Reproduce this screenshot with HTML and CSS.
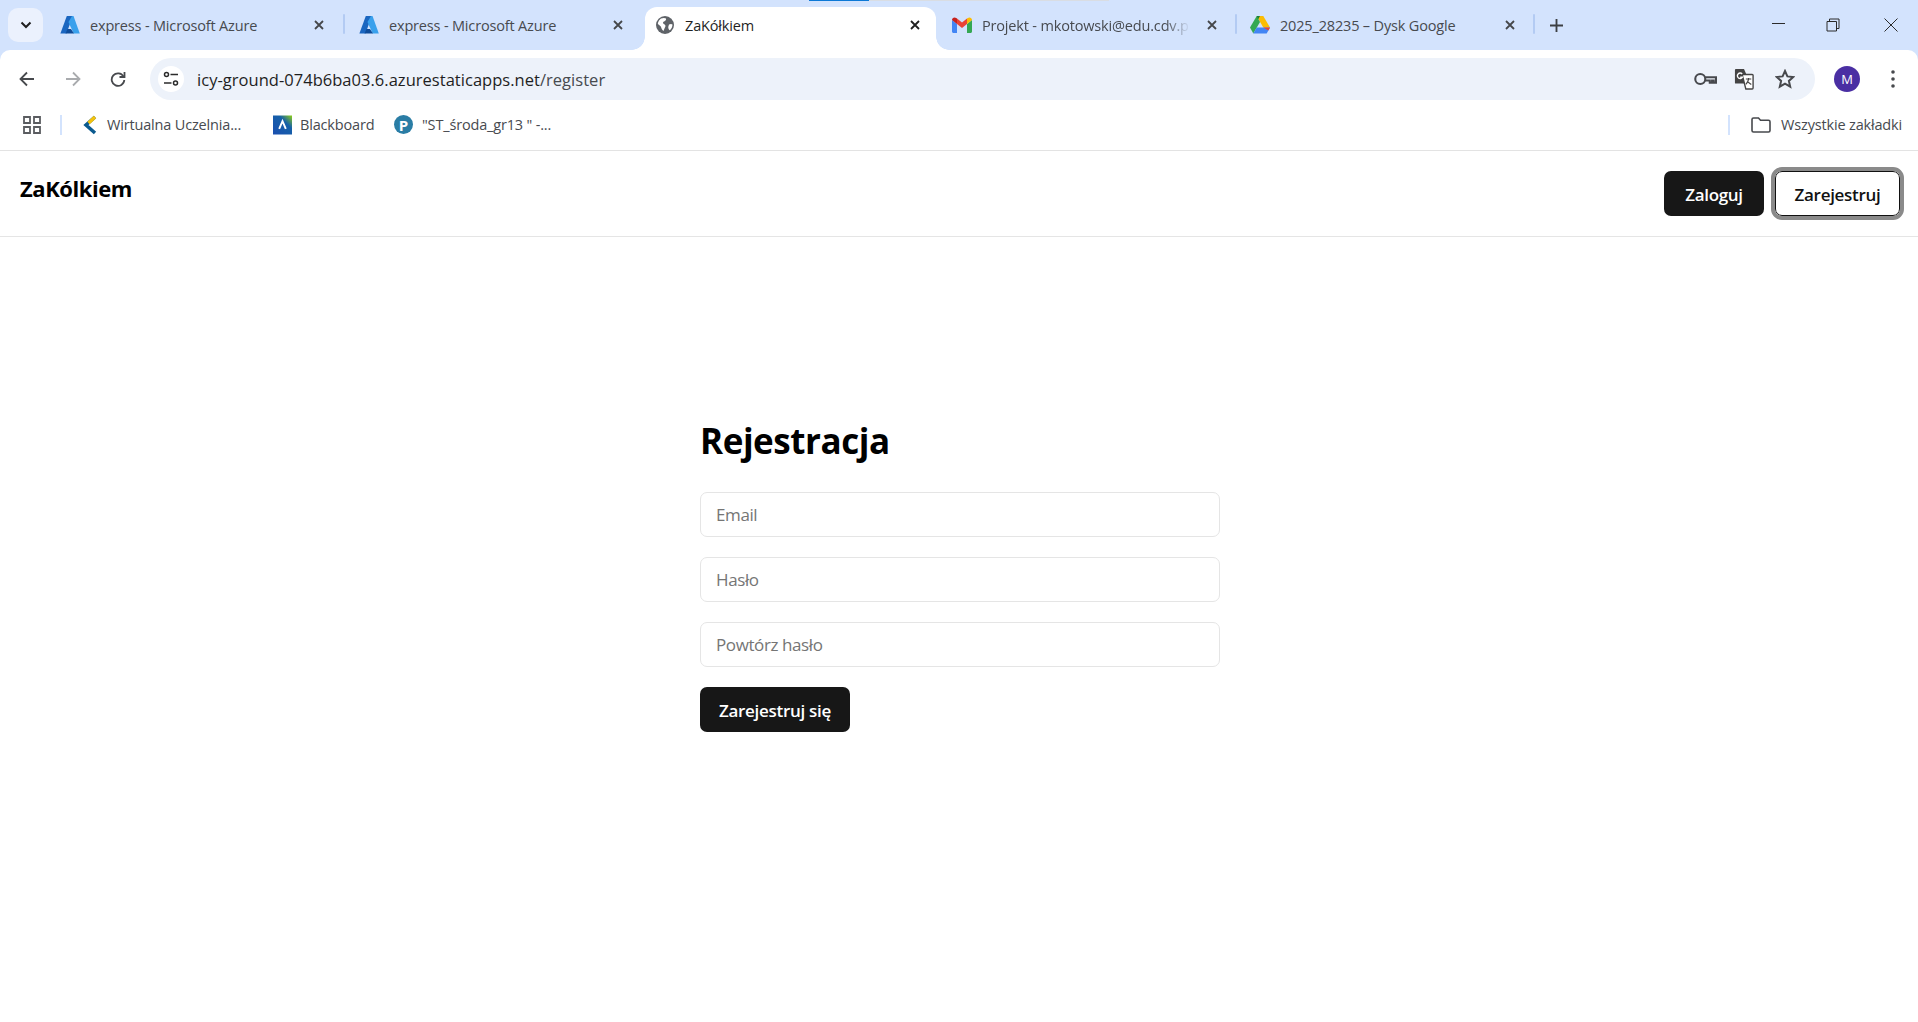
FILE: index.html
```html
<!DOCTYPE html>
<html lang="pl">
<head>
<meta charset="utf-8">
<title>ZaKółkiem</title>
<link rel="stylesheet" href="styles.css">
</head>
<body>
<div class="loadbar"><span class="loadbar-fill"></span></div>
<div class="tabstrip">
  <button class="tabsearch"><svg width="12" height="8" viewBox="0 0 12 8"><path d="M1.500 1.500 6 6l4.500-4.500" fill="none" stroke="#1f1f1f" stroke-width="2"/></svg></button>
  <div class="tab t1">
    <svg class="fav" viewBox="0 0 20 20"><path d="M6.800 1h6L6.500 18.500H.4z" fill="#1a66c0"/><path d="M12 1h1.500l6.300 17.500h-6.200L8.500 7z" fill="#39a0ec"/><path d="M5.500 18.500h8.500l-3-4.500H7.500z" fill="#0e4c9a"/></svg>
    <span class="tabtitle">express - Microsoft Azure</span>
    <svg class="x" viewBox="0 0 10 10"><path d="m1 1 8 8M9 1 1 9"/></svg>
  </div>
  <i class="tsep"></i>
  <div class="tab t2">
    <svg class="fav" viewBox="0 0 20 20"><path d="M6.800 1h6L6.500 18.500H.4z" fill="#1a66c0"/><path d="M12 1h1.500l6.300 17.500h-6.200L8.500 7z" fill="#39a0ec"/><path d="M5.500 18.500h8.500l-3-4.500H7.500z" fill="#0e4c9a"/></svg>
    <span class="tabtitle">express - Microsoft Azure</span>
    <svg class="x" viewBox="0 0 10 10"><path d="m1 1 8 8M9 1 1 9"/></svg>
  </div>
  <div class="tab active">
    <svg class="fav" viewBox="0 0 20 20"><circle cx="10" cy="10" r="9" fill="#5f6368"/><path d="M6 3.500c2-.8 4-.8 5 0 .6 1.500-1 2.800-2.500 3.300-1 .8-.5 2 .8 2.500 1.500.7 1.500 2.300.5 3.500L8.500 16C6.800 15 6.500 13 5.800 11.500 4.800 10.500 3.400 9.800 2.800 8.500 3.300 6.300 4.500 4.500 6 3.500zM14 9.500c1.400-.8 2.700-.8 3.500 0 0 2.200-1 4.300-2.600 5.700-1.200-.6-1.800-2-1.600-3.500z" fill="#fff"/></svg>
    <span class="tabtitle">ZaKółkiem</span>
    <svg class="x" viewBox="0 0 10 10"><path d="m1 1 8 8M9 1 1 9"/></svg>
  </div>
  <div class="tab t4">
    <svg class="fav" viewBox="0 0 20 16"><path d="M0 3v11.500C0 15.300.7 16 1.500 16H5V7z" fill="#4285f4"/><path d="M15 7v9h3.500c.8 0 1.500-.7 1.500-1.500V3z" fill="#34a853"/><path d="M5 7V1.500L10 5.500l5-4V7l-5 4z" fill="#ea4335"/><path d="M0 3c0-2.200 2.500-3.400 4.200-2L5 1.500V7z" fill="#c5221f"/><path d="M15 1.500 15.800 1C17.500-.4 20 .8 20 3l-5 4z" fill="#fbbc04"/></svg>
    <span class="tabtitle fade">Projekt - mkotowski@edu.cdv.pl</span>
    <svg class="x" viewBox="0 0 10 10"><path d="m1 1 8 8M9 1 1 9"/></svg>
  </div>
  <i class="tsep"></i>
  <div class="tab t5">
    <svg class="fav" viewBox="0 0 20 18"><path d="M6.700 0h6.600l6.700 11.500h-6.700z" fill="#fbbc04"/><path d="M6.700 0 0 11.500 3.300 17.500 10 6z" fill="#34a853"/><path d="M3.300 17.500h13.400L20 11.500H6.700z" fill="#4285f4"/><path d="M6.700 0h3.300L8 3.400z" fill="#188038"/><path d="M13.300 11.500H20l-1.500 3z" fill="#ea4335"/></svg>
    <span class="tabtitle">2025_28235 – Dysk Google</span>
    <svg class="x" viewBox="0 0 10 10"><path d="m1 1 8 8M9 1 1 9"/></svg>
  </div>
  <i class="tsep"></i>
  <svg class="plus" viewBox="0 0 14 14"><path d="M7 0v14M0 7h14"/></svg>
  <div class="winctl">
    <svg class="min" viewBox="0 0 14 14"><path d="M0 5.500h13"/></svg>
    <svg viewBox="0 0 14 14"><path d="M1 3.500h9.500V13H1zM3.500 3.500V1H13v9.500h-2.500"/></svg>
    <svg viewBox="0 0 14 14"><path d="m.5.500 13 13M13.500.500l-13 13"/></svg>
  </div>
</div>
<div class="toolbar-bg">
<div class="toolbar">
  <svg class="navic back" viewBox="0 0 16 16"><path d="M15 8H2M8 1.500 1.500 8 8 14.500"/></svg>
  <svg class="navic fwd" viewBox="0 0 16 16"><path d="M1 8h13M8 1.500 14.500 8 8 14.500"/></svg>
  <svg class="navic reload" viewBox="0 0 16 16"><path d="M13.500 5.500A6.300 6.300 0 1 0 14.300 9"/><path d="M14.500 1v5h-5" /></svg>
  <div class="omnibox">
    <span class="tune"><svg viewBox="0 0 16 16" width="16" height="16"><circle cx="3.500" cy="3.500" r="2" /><path d="M7.500 3.500H15M1 12h7.500"/><circle cx="12.500" cy="12" r="2"/></svg></span>
    <span class="url">icy-ground-074b6ba03.6.azurestaticapps.net<span class="urlpath">/register</span></span>
    <svg class="omic key" viewBox="0 0 22 13"><circle cx="6" cy="6.500" r="4.800"/><path d="M10.800 4.800H21v5.200h-2.200V8h-1.500v2h-2.200V8h-4.500"/></svg>
    <svg class="omic tr" viewBox="0 0 22 24"><path d="M1 2c0-.6.400-1 1-1h9l7 16H2c-.6 0-1-.4-1-1z" fill="#444" stroke="none"/><path d="M9 7h11c.6 0 1 .4 1 1v14c0 .6-.4 1-1 1h-7z" fill="#fff" stroke="#444" stroke-width="1.500"/><path d="M9 6.500A3 3 0 1 0 9.300 10H6.800" stroke="#fff" stroke-width="1.500"/><path d="M13 12h6M16 11v1c0 3-2 5-3 6M14.500 14c1 2 3 3 4.500 4" stroke="#444" stroke-width="1.300"/></svg>
    <svg class="omic star" viewBox="0 0 20 20"><path d="m10 2 2.400 5.400 5.900.6-4.400 3.900 1.300 5.800L10 14.700l-5.200 3 1.300-5.800L1.700 8l5.900-.6z"/></svg>
  </div>
  <div class="avatar">M</div>
  <svg class="kebab" viewBox="0 0 4 18"><circle cx="2" cy="2" r="1.800"/><circle cx="2" cy="9" r="1.800"/><circle cx="2" cy="16" r="1.800"/></svg>
</div>
</div>
<div class="bookmarks">
  <svg class="apps" viewBox="0 0 18 18"><path d="M1 1h6v6H1zM11 1h6v6h-6zM1 11h6v6H1zM11 11h6v6h-6z"/></svg>
  <i class="bsep"></i>
  <svg class="bm-ic wu" viewBox="0 0 14 20"><path d="M12 2 3 10l9 8" fill="none" stroke="#0b5a8f" stroke-width="3.500"/><path d="M12 2 5.500 8" fill="none" stroke="#f4c20d" stroke-width="3.500"/></svg>
  <span class="bm wu-t">Wirtualna Uczelnia...</span>
  <span class="bb"><svg viewBox="0 0 20 20" width="19" height="20"><defs><linearGradient id="bbg" x1="0" y1="1" x2="1" y2="0"><stop offset="0" stop-color="#1a4fb0"/><stop offset=".65" stop-color="#1560a8"/><stop offset="1" stop-color="#8fd015"/></linearGradient></defs><rect width="20" height="20" fill="url(#bbg)"/><path d="M6.500 14 10 6l3.500 8" fill="none" stroke="#fff" stroke-width="2"/></svg></span>
  <span class="bm bb-t">Blackboard</span>
  <span class="pp">P</span>
  <span class="bm pp-t">"ST_środa_gr13 " -...</span>
  <i class="bsep right"></i>
  <svg class="folder" viewBox="0 0 20 16"><path d="M1 2.500C1 1.700 1.700 1 2.500 1h5l2 2.200h8c.8 0 1.500.7 1.500 1.500v8.800c0 .8-.7 1.500-1.500 1.500h-15c-.8 0-1.500-.7-1.500-1.500z"/></svg>
  <span class="bm all">Wszystkie zakładki</span>
</div>
<header class="site">
  <div class="brand">ZaKólkiem</div>
  <nav class="actions">
    <button class="btn dark">Zaloguj</button>
    <button class="btn light">Zarejestruj</button>
  </nav>
</header>
<main class="page">
  <h1>Rejestracja</h1>
  <form class="form">
    <input class="field" type="email" placeholder="Email">
    <input class="field" type="password" placeholder="Hasło">
    <input class="field" type="password" placeholder="Powtórz hasło">
    <button class="btn dark submit" type="button">Zarejestruj się</button>
  </form>
</main>
</body>
</html>
```
FILE: styles.css
```css
*{box-sizing:border-box}
html,body{margin:0;padding:0;height:100%;overflow:hidden;background:#fff}
body{font-family:"Open Sans","Noto Sans",sans-serif;color:#000;position:relative}
button,input{font-family:inherit}
.loadbar{position:absolute;left:809px;top:0;width:300px;height:1px;background:#d9dde3}
.loadbar-fill{display:block;width:60px;height:1px;background:#0b78d6}
.tabstrip{height:50px;background:#d3e3fd;display:flex;align-items:flex-start;padding-left:8px}
.tabsearch{width:35px;height:34px;margin-top:8px;border:0;border-radius:10px;background:#ebf1fd;display:flex;align-items:center;justify-content:center;padding:0;flex:none}
.tab{height:43px;margin-top:7px;display:flex;align-items:center;flex:none;padding-bottom:7px;position:relative}
.fav{width:20px;height:20px;flex:none}
.tabtitle{font-size:14.500px;letter-spacing:-.17px;color:#474a4f;white-space:nowrap;overflow:hidden;flex:1;margin-left:10px}
.x{width:10px;height:10px;fill:none;stroke:#45474a;stroke-width:1.800;flex:none}
.t1{margin-left:17px;width:283px}
.t1 .x,.t2 .x{margin-right:19px}
.tsep{width:2px;height:20px;background:#b3cbf3;border-radius:1px;margin-top:14px;flex:none}
.t2{margin-left:14px;width:283px}
.active{margin-left:3px;width:291px;background:#fff;border-radius:12px 12px 0 0;padding-left:10px}
.active::before,.active::after{content:"";position:absolute;bottom:0;width:13px;height:13px}
.active::before{left:-13px;background:radial-gradient(circle at 0 0,transparent 12.500px,#fff 13px)}
.active::after{right:-13px;background:radial-gradient(circle at 100% 0,transparent 12.500px,#fff 13px)}
.active .tabtitle{color:#1f1f1f}
.active .x{stroke:#1f1f1f;margin-right:16px}
.t4{margin-left:16px;width:283px}
.t4 .fav{height:16px}
.t4 .x{margin-right:18px}
.t4 .tabtitle{margin-right:17px}
.fade{-webkit-mask-image:linear-gradient(90deg,#000 88%,transparent);mask-image:linear-gradient(90deg,#000 88%,transparent)}
.t5{margin-left:13px;width:283px}
.t5 .fav{height:18px}
.t5 .x{margin-right:18px}
.plus{width:13px;height:13px;fill:none;stroke:#3c3f43;stroke-width:2;margin:19px 0 0 15px;flex:none}
.winctl{margin-left:auto;display:flex;margin-top:18px;padding-right:20px;gap:44px}
.winctl svg{width:14px;height:14px;fill:none;stroke:#2b2b2b;stroke-width:1}
.winctl .min{margin-right:-4px}
.toolbar-bg{background:#d3e3fd}
.toolbar{height:50px;background:#fff;border-radius:10px 10px 0 0;display:flex;align-items:center;padding-top:8px}
.navic{width:16px;height:16px;fill:none;stroke:#47494d;stroke-width:1.800;flex:none}
.back{margin-left:19px}
.fwd{margin-left:30px;stroke:#a9abae}
.reload{margin-left:29px}
.omnibox{margin-left:24px;width:1665px;height:42px;border-radius:21px;background:#edf2fa;display:flex;align-items:center;flex:none}
.tune{width:26px;height:26px;margin-left:8px;border-radius:50%;background:#fff;display:flex;align-items:center;justify-content:center;flex:none}
.tune svg{fill:none;stroke:#2b2b2b;stroke-width:1.500}
.url{font-size:16.500px;letter-spacing:.03px;color:#1f1f1f;margin-left:13px;white-space:nowrap}
.urlpath{color:#474a4f}
.omic{fill:none;stroke:#47494d;stroke-width:2;flex:none}
.key{width:23px;height:14px;margin-left:auto}
.tr{width:20px;height:22px;margin-left:17px}
.star{width:20px;height:20px;margin-left:21px;margin-right:20px}
.avatar{width:26px;height:26px;margin-left:19px;border-radius:50%;background:#4a2fa3;color:#fff;font-size:13px;display:flex;align-items:center;justify-content:center;flex:none}
.kebab{width:4px;height:18px;fill:#47494d;margin-left:31px;flex:none}
.bookmarks{height:51px;padding-bottom:1px;border-bottom:1px solid #e3e3e3;display:flex;align-items:center}
.bm{font-size:14.500px;letter-spacing:-.17px;color:#474a4f;white-space:nowrap}
.apps{width:18px;height:18px;fill:none;stroke:#5a5c60;stroke-width:1.800;margin-left:23px;flex:none}
.bsep{width:2px;height:20px;background:#d3e3fd;margin-left:19px;flex:none}
.wu{width:14px;height:20px;margin-left:21px;flex:none}
.wu-t{margin-left:10px;width:166px}
.bb{width:19px;height:20px;flex:none;display:block}
.bb-t{margin-left:8px;width:94px}
.pp{width:19px;height:19px;border-radius:50%;background:#2a7da5;color:#fff;font-size:15px;font-weight:700;display:flex;align-items:center;justify-content:center;flex:none}
.pp-t{margin-left:9px}
.bsep.right{margin-left:auto}
.folder{width:20px;height:16px;fill:none;stroke:#47494d;stroke-width:1.600;margin-left:21px;flex:none}
.all{margin-left:10px;margin-right:16px}
.site{height:86px;border-bottom:1px solid #e5e5e5;display:flex;justify-content:space-between;padding:20px 18px 0 20px}
.brand{font-size:22px;font-weight:700;letter-spacing:-.45px;line-height:34px}
.actions{display:flex;gap:11px;height:45px}
.btn{height:45px;border-radius:7px;font-size:17px;font-weight:600;letter-spacing:-.3px;padding:1px 0 0;cursor:pointer}
.dark{background:#171717;color:#fff;border:0;width:100px}
.light{background:#fff;color:#111;border:1px solid #111;width:125px;outline:4px solid #8a8a8a}
.page{width:522px;margin:0 auto;padding:179px 0 0 2px}
h1{margin:0;font-size:35px;font-weight:700;letter-spacing:-.45px;line-height:50px}
.form{display:flex;flex-direction:column;gap:20px;align-items:flex-start;margin-top:26px}
.field{width:100%;height:45px;border:1px solid #e5e5e5;border-radius:7px;padding:0 15px;font-size:17px;letter-spacing:-.4px;background:#fff;outline:0}
.field::placeholder{color:#757575;opacity:1}
.submit{width:150px}
```
